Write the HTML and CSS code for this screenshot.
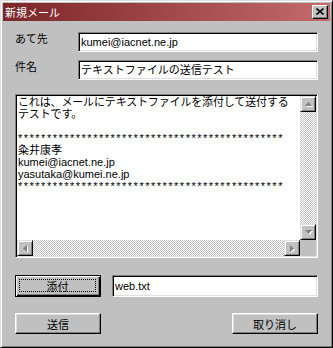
FILE: index.html
```html
<!DOCTYPE html>
<html lang="ja">
<head>
<meta charset="utf-8">
<title>新規メール</title>
<link rel="stylesheet" href="styles.css">
</head>
<body>
<div class="window">
  <div class="titlebar">
    <span class="title">新規メール</span>
    <span class="close">
      <svg width="8" height="7" viewBox="0 0 8 7"><path d="M0.5 0.5 L7.5 6.5 M7.5 0.5 L0.5 6.5" stroke="#000" stroke-width="1.6" fill="none"/></svg>
    </span>
  </div>
  <div class="content">
    <div class="field">
      <span class="label">あて先</span>
      <div class="input">kumei@iacnet.ne.jp</div>
    </div>
    <div class="field">
      <span class="label">件名</span>
      <div class="input">テキストファイルの送信テスト</div>
    </div>
    <div class="memo">
      <div class="memo-main">
        <div class="memo-text">
          <div class="line jp">これは、メールにテキストファイルを添付して送付する</div>
          <div class="line jp">テストです。</div>
          <div class="line"></div>
          <div class="line stars">**********************************************</div>
          <div class="line">粂井康孝</div>
          <div class="line">kumei@iacnet.ne.jp</div>
          <div class="line">yasutaka@kumei.ne.jp</div>
          <div class="line stars">**********************************************</div>
        </div>
        <div class="vscroll">
          <span class="sbtn">
            <svg width="7" height="5" viewBox="0 0 7 5"><path d="M3.5 0 L7 4 L0 4 Z" fill="#808080"/></svg>
          </span>
          <span class="track"></span>
          <span class="sbtn">
            <svg width="7" height="5" viewBox="0 0 7 5"><path d="M0 0 L7 0 L3.5 4 Z" fill="#808080"/></svg>
          </span>
        </div>
      </div>
      <div class="hscroll">
        <span class="sbtn">
          <svg width="5" height="7" viewBox="0 0 5 7"><path d="M4 0 L4 7 L0 3.5 Z" fill="#808080"/></svg>
        </span>
        <span class="track"></span>
        <span class="sbtn">
          <svg width="5" height="7" viewBox="0 0 5 7"><path d="M0 0 L4 3.5 L0 7 Z" fill="#808080"/></svg>
        </span>
        <span class="corner"></span>
      </div>
    </div>
    <div class="attach-row">
      <button class="btn btn-default"><span class="focus">添付</span></button>
      <div class="input file">web.txt</div>
    </div>
    <div class="button-row">
      <button class="btn">送信</button>
      <button class="btn">取り消し</button>
    </div>
  </div>
</div>
</body>
</html>
```
FILE: styles.css
```css
html, body {
  margin: 0;
  padding: 0;
  background: #c0c0c0;
  overflow: hidden;
}

body {
  font-family: "Liberation Sans", "Noto Sans CJK JP", sans-serif;
  font-size: 11px;
  color: #000;
}

.window {
  width: 333px;
  height: 348px;
  box-sizing: border-box;
  background: #c0c0c0;
  border: 1px solid;
  border-color: #dfdfdf #000 #000 #dfdfdf;
  box-shadow: inset 1px 1px #fff, inset -1px -1px #808080;
  padding: 2px;
  display: flex;
  flex-direction: column;
}

.titlebar {
  height: 18px;
  flex: none;
  display: flex;
  align-items: center;
  justify-content: space-between;
  background: linear-gradient(90deg, #7a2629 0%, #9c4446 45%, #c46c6c 100%);
}

.title {
  color: #fff;
  font-family: "Noto Sans CJK JP", sans-serif;
  font-size: 11px;
  line-height: 14px;
  padding-left: 2px;
}

.close {
  width: 16px;
  height: 14px;
  box-sizing: border-box;
  margin-right: 2px;
  background: #c0c0c0;
  border: 1px solid;
  border-color: #fff #000 #000 #fff;
  box-shadow: inset -1px -1px #808080;
  display: flex;
  align-items: center;
  justify-content: center;
  padding-bottom: 1px;
}

.content {
  flex: 1;
  display: flex;
  flex-direction: column;
  padding: 11px 12px 0 12px;
}

.field {
  display: flex;
  align-items: flex-start;
  height: 20px;
  margin-bottom: 8px;
}

.label {
  width: 63px;
  flex: none;
  font-family: "Noto Sans CJK JP", sans-serif;
  font-size: 11px;
  line-height: 13px;
}

.input {
  flex: 1;
  height: 20px;
  box-sizing: border-box;
  background: #fff;
  border: 1px solid;
  border-color: #808080 #fff #fff #808080;
  box-shadow: inset 1px 1px #000, inset -1px -1px #dfdfdf;
  padding: 1px 2px 0 2px;
  line-height: 17px;
  white-space: nowrap;
  overflow: hidden;
}

.memo {
  margin-top: 6px;
  height: 164px;
  box-sizing: border-box;
  background: #fff;
  border: 1px solid;
  border-color: #808080 #fff #fff #808080;
  box-shadow: inset 1px 1px #000, inset -1px -1px #dfdfdf;
  padding: 1px;
  display: flex;
  flex-direction: column;
}

.memo-main {
  flex: 1;
  display: flex;
  min-height: 0;
}

.memo-text {
  flex: 1;
  padding: 0 0 0 1px;
  overflow: hidden;
}

.line {
  height: 12px;
  line-height: 12px;
  font-size: 11px;
  white-space: nowrap;
}

.jp {
  letter-spacing: -0.15px;
}

.stars {
  letter-spacing: 1.5px;
}

.vscroll {
  width: 16px;
  flex: none;
  display: flex;
  flex-direction: column;
}

.hscroll {
  height: 16px;
  flex: none;
  display: flex;
}

.track {
  flex: 1;
  background: repeating-conic-gradient(#c0c0c0 0 25%, #fff 0 50%) 0 0 / 2px 2px;
}

.sbtn {
  width: 16px;
  height: 16px;
  flex: none;
  box-sizing: border-box;
  background: #c0c0c0;
  border: 1px solid;
  border-color: #dfdfdf #000 #000 #dfdfdf;
  box-shadow: inset 1px 1px #fff, inset -1px -1px #808080;
  display: flex;
  align-items: center;
  justify-content: center;
}

.sbtn svg {
  filter: drop-shadow(1px 1px 0 #fff);
}

.corner {
  width: 16px;
  height: 16px;
  flex: none;
  background: #c0c0c0;
}

.attach-row {
  margin-top: 17px;
  height: 22px;
  display: flex;
  gap: 11px;
}

.attach-row .file {
  height: 22px;
  line-height: 18px;
}

.button-row {
  margin-top: 16px;
  height: 21px;
  display: flex;
  justify-content: space-between;
}

.btn {
  width: 86px;
  height: 21px;
  box-sizing: border-box;
  margin: 0;
  padding: 0;
  background: #c0c0c0;
  font-family: "Noto Sans CJK JP", sans-serif;
  font-size: 11px;
  line-height: 14px;
  color: #000;
  border: 1px solid;
  border-color: #fff #000 #000 #fff;
  box-shadow: inset -1px -1px #808080, inset 1px 1px #dfdfdf;
  display: flex;
  align-items: center;
  justify-content: center;
}

.btn-default {
  height: 22px;
  border: 1px solid #000;
  box-shadow: inset 1px 1px #fff, inset -1px -1px #000, inset -2px -2px #808080;
  padding: 3px 4px 4px 3px;
}

.focus {
  flex: 1;
  align-self: stretch;
  border: 1px dotted #000;
  display: flex;
  align-items: center;
  justify-content: center;
}
```
